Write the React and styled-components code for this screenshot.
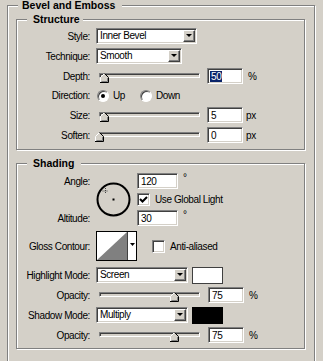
import React from 'react';
import styled, { createGlobalStyle } from 'styled-components';

const GlobalStyle = createGlobalStyle`
  html, body {
    margin: 0;
    padding: 0;
    background: #d4d0c8;
  }
  body {
    font-family: "Liberation Sans", Arial, sans-serif;
    font-size: 10px;
    letter-spacing: -0.4px;
    color: #000;
  }
`;

const Window = styled.div`
  width: 323px;
  height: 361px;
  overflow: hidden;
  box-sizing: border-box;
  padding: 5px 0 0 7px;
  background: #d4d0c8;
`;

const Group = styled.div`
  position: relative;
  box-sizing: border-box;
  border: 1px solid #808080;
  box-shadow: inset 1px 1px 0 #fff, 1px 1px 0 #fff;
`;

const OuterGroup = styled(Group)`
  width: 308px;
  height: 400px;
  padding: 13px 0 0 8px;
`;

const Section = styled(Group)`
  width: 289px;
  margin-top: ${p => p.$mt || 0}px;
  padding: ${p => p.$pad};
  display: flex;
  flex-direction: column;
  gap: ${p => p.$gap || 0}px;
`;

const GroupTitle = styled.span`
  position: absolute;
  top: -7px;
  left: ${p => p.$left}px;
  padding: 0 ${p => p.$padRight}px 0 ${p => p.$padLeft}px;
  background: #d4d0c8;
  font-weight: bold;
  font-size: 10.5px;
  letter-spacing: 0;
  line-height: 12px;
`;

const Row = styled.div`
  display: flex;
  align-items: center;
  height: ${p => p.$h || 16}px;
  margin-top: ${p => p.$mt || 0}px;
`;

const Label = styled.div`
  width: 73px;
  margin-right: 6px;
  text-align: right;
  white-space: nowrap;
  flex: none;
`;

const Sunken = styled.div`
  box-sizing: border-box;
  border: 1px solid;
  border-color: #808080 #fff #fff #808080;
  box-shadow: inset 1px 1px 0 #404040, inset -1px -1px 0 #d4d0c8;
  background: #fff;
`;

const SelectBox = styled(Sunken)`
  width: ${p => p.$w}px;
  height: 16px;
  display: flex;
  align-items: stretch;
  padding: 1px;
`;

const SelectText = styled.div`
  flex: 1;
  padding-left: 2px;
  line-height: 12px;
  white-space: nowrap;
  overflow: hidden;
`;

const SelectButton = styled.div`
  width: 12px;
  box-sizing: border-box;
  background: #d4d0c8;
  border: 1px solid;
  border-color: #fff #404040 #404040 #fff;
  box-shadow: inset -1px -1px 0 #808080;
  display: flex;
  align-items: center;
  justify-content: center;

  &::after {
    content: "";
    border-left: 3px solid transparent;
    border-right: 3px solid transparent;
    border-top: 3px solid #000;
    margin: 0 1px 1px 0;
  }
`;

const Track = styled.div`
  position: relative;
  align-self: flex-start;
  margin: 5px 0 0 3px;
  width: 101px;
  height: 5px;
  box-sizing: border-box;
  border: 1px solid;
  border-color: #808080 #fff #fff #808080;
  box-shadow: inset 1px 1px 0 #404040;
  background: #d4d0c8;
  flex: none;
`;

const ThumbShape = styled.svg`
  position: absolute;
  top: -1px;
  width: 9px;
  height: 10px;
  overflow: visible;
`;

const NumberBox = styled(Sunken)`
  width: ${p => p.$w || 36}px;
  height: 16px;
  margin-left: ${p => p.$ml}px;
  padding: 1px 0 0 3px;
  line-height: 13px;
  flex: none;
`;

const Selected = styled.span`
  background: #0a246a;
  color: #fff;
  padding: 0 1px;
  margin-left: -1px;
`;

const Unit = styled.span`
  margin-left: ${p => p.$ml}px;
  align-self: ${p => (p.$raised ? 'flex-start' : 'center')};
  line-height: ${p => (p.$raised ? '10px' : 'normal')};
`;

const RadioDot = styled.span`
  width: 12px;
  height: 12px;
  box-sizing: border-box;
  border-radius: 50%;
  border: 1px solid;
  border-color: #808080 #fff #fff #808080;
  box-shadow: inset 1px 1px 0 #404040;
  background: #fff;
  display: flex;
  align-items: center;
  justify-content: center;
  margin-left: ${p => p.$ml}px;
  flex: none;

  &::after {
    content: "";
    width: 4px;
    height: 4px;
    border-radius: 50%;
    background: ${p => (p.$on ? '#000' : 'transparent')};
  }
`;

const OptionText = styled.span`
  margin-left: ${p => p.$ml}px;
  white-space: nowrap;
`;

const CheckBox = styled(Sunken)`
  width: 13px;
  height: 13px;
  margin-left: ${p => p.$ml || 0}px;
  flex: none;
  display: flex;
  align-items: center;
  justify-content: center;
`;

const AngleGrid = styled.div`
  display: grid;
  grid-template-columns: 73px 35px auto;
  grid-template-rows: 16px 13px 16px;
  column-gap: 6px;
  row-gap: 4px;
`;

const GridLabel = styled(Label)`
  grid-column: 1;
  grid-row: ${p => p.$row};
  margin: 0;
  align-self: center;
`;

const GridCell = styled.div`
  grid-column: 3;
  grid-row: ${p => p.$row};
  display: flex;
  align-items: center;
`;

const Dial = styled.svg`
  grid-column: 2;
  grid-row: 1 / 4;
  align-self: center;
  width: 35px;
  height: 35px;
`;

const Contour = styled.svg`
  width: 41px;
  height: 30px;
  flex: none;
`;

const Swatch = styled.div`
  width: 31px;
  height: 17px;
  margin-left: 4px;
  box-sizing: border-box;
  border: 1px solid ${p => (p.$color === '#fff' ? '#404040' : '#000')};
  background: ${p => p.$color};
  flex: none;
`;

function Select({ width, value }) {
  return (
    <SelectBox $w={width}>
      <SelectText>{value}</SelectText>
      <SelectButton />
    </SelectBox>
  );
}

function Slider({ pos }) {
  return (
    <Track>
      <ThumbShape viewBox="0 0 9 10" style={{ left: Math.round(pos * 100) - 5 }}>
        <polygon points="0.5,4.5 4.5,0.5 8.5,4.5 8.5,9.5 0.5,9.5" fill="#d4d0c8" />
        <polyline points="0.5,9 0.5,4.5 4.5,0.5" fill="none" stroke="#fff" strokeWidth="1" />
        <polyline points="4.5,0.5 8.5,4.5 8.5,9.5 0,9.5" fill="none" stroke="#000" strokeWidth="1" />
        <polyline points="7.5,5 7.5,8.5 1.5,8.5" fill="none" stroke="#808080" strokeWidth="1" />
      </ThumbShape>
    </Track>
  );
}

function Check({ on, ml }) {
  return (
    <CheckBox $ml={ml}>
      {on && (
        <svg width="9" height="9" viewBox="0 0 9 9">
          <path d="M1 4 L3.5 6.5 L8 2" fill="none" stroke="#000" strokeWidth="2" />
        </svg>
      )}
    </CheckBox>
  );
}

function SliderRow({ label, value, pos, unit, unitGap, selected }) {
  return (
    <Row>
      <Label>{label}</Label>
      <Slider pos={pos} />
      <NumberBox $ml={7}>{selected ? <Selected>{value}</Selected> : value}</NumberBox>
      <Unit $ml={unitGap}>{unit}</Unit>
    </Row>
  );
}

export default function App() {
  return (
    <Window>
      <GlobalStyle />
      <OuterGroup>
        <GroupTitle $left={10} $padLeft={4} $padRight={7}>Bevel and Emboss</GroupTitle>

        <Section $pad="8px 0 6px 0" $gap={4}>
          <GroupTitle $left={10} $padLeft={6} $padRight={3}>Structure</GroupTitle>
          <Row>
            <Label>Style:</Label>
            <Select width={101} value="Inner Bevel" />
          </Row>
          <Row>
            <Label>Technique:</Label>
            <Select width={86} value="Smooth" />
          </Row>
          <SliderRow label="Depth:" value="50" pos={0.05} unit="%" unitGap={5} selected />
          <Row $h={15}>
            <Label>Direction:</Label>
            <RadioDot $on $ml={1} />
            <OptionText $ml={4}>Up</OptionText>
            <RadioDot $ml={15} />
            <OptionText $ml={4}>Down</OptionText>
          </Row>
          <SliderRow label="Size:" value="5" pos={0.045} unit="px" unitGap={3} />
          <SliderRow label="Soften:" value="0" pos={0} unit="px" unitGap={3} />
        </Section>

        <Section $mt={13} $pad="9px 0 5px 0">
          <GroupTitle $left={10} $padLeft={6} $padRight={7}>Shading</GroupTitle>
          <AngleGrid>
            <GridLabel $row={1}>Angle:</GridLabel>
            <GridLabel $row={3}>Altitude:</GridLabel>
            <Dial viewBox="0 0 35 35">
              <circle cx="17.5" cy="17.5" r="16" fill="none" stroke="#000" strokeWidth="2" />
              <rect x="16.5" y="16.5" width="2" height="2" fill="#000" />
              <g stroke="#404040" strokeWidth="1" strokeDasharray="1 1">
                <line x1="9.5" y1="6" x2="9.5" y2="12" />
                <line x1="6.5" y1="9" x2="12.5" y2="9" />
              </g>
            </Dial>
            <GridCell $row={1}>
              <NumberBox $w={41} $ml={0}>120</NumberBox>
              <Unit $ml={5} $raised>°</Unit>
            </GridCell>
            <GridCell $row={2}>
              <Check on />
              <OptionText $ml={5}>Use Global Light</OptionText>
            </GridCell>
            <GridCell $row={3}>
              <NumberBox $w={41} $ml={0}>30</NumberBox>
              <Unit $ml={5} $raised>°</Unit>
            </GridCell>
          </AngleGrid>

          <Row $h={30} $mt={5}>
            <Label>Gloss Contour:</Label>
            <Contour viewBox="0 0 41 30">
              <rect x="0.5" y="0.5" width="40" height="29" fill="#fff" stroke="#000" />
              <polygon points="1,29 31,1 31,29" fill="#808080" />
              <line x1="31.5" y1="1" x2="31.5" y2="29" stroke="#404040" />
              <polygon points="34,12 39,12 36.5,15" fill="#000" />
            </Contour>
            <Check ml={15} />
            <OptionText $ml={5}>Anti-aliased</OptionText>
          </Row>

          <Row $mt={6}>
            <Label>Highlight Mode:</Label>
            <Select width={92} value="Screen" />
            <Swatch $color="#fff" />
          </Row>
          <Row $mt={4}>
            <Label>Opacity:</Label>
            <Slider pos={0.75} />
            <NumberBox $ml={8}>75</NumberBox>
            <Unit $ml={5}>%</Unit>
          </Row>
          <Row $mt={4}>
            <Label>Shadow Mode:</Label>
            <Select width={92} value="Multiply" />
            <Swatch $color="#000" />
          </Row>
          <Row $mt={4}>
            <Label>Opacity:</Label>
            <Slider pos={0.75} />
            <NumberBox $ml={8}>75</NumberBox>
            <Unit $ml={5}>%</Unit>
          </Row>
        </Section>
      </OuterGroup>
    </Window>
  );
}
